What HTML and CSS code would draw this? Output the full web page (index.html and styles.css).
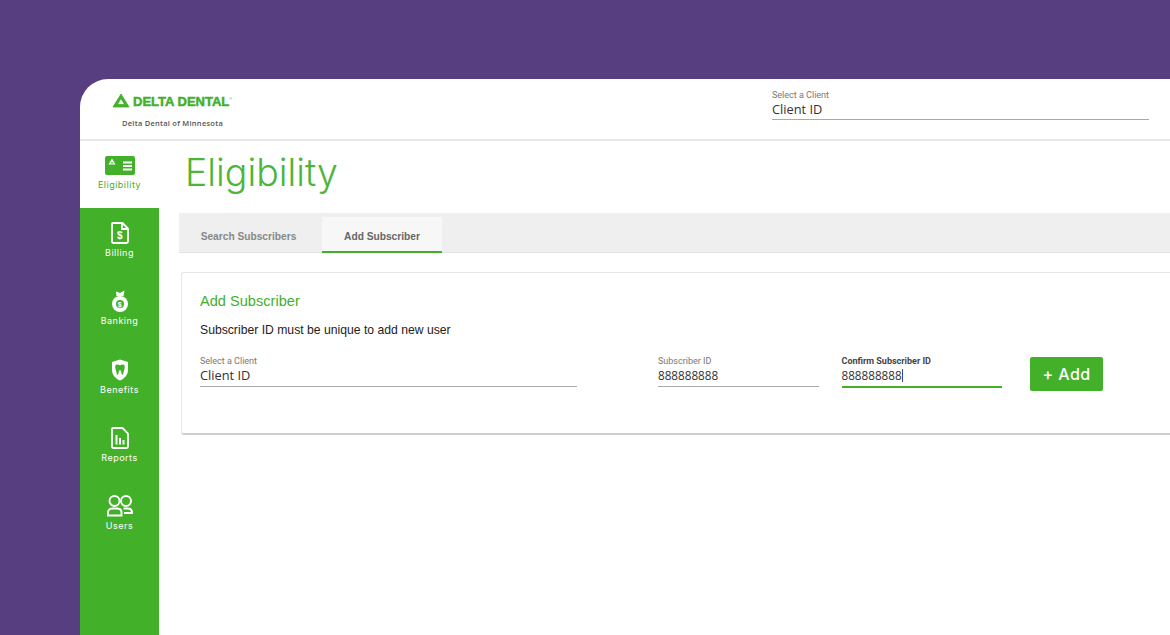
FILE: index.html
```html
<!DOCTYPE html>
<html lang="en">

<head>
    <meta charset="UTF-8" />
    <title>Eligibility</title>
    <link rel="stylesheet" href="styles.css">
</head>

<body>
    <div class="window">
        <header class="topbar">
            <div class="brand">
                <div class="logo">
                    <svg class="logo-mark" viewBox="0 0 18 15">
                        <path fill-rule="evenodd" stroke="#43b02a" stroke-width="0.800" stroke-linejoin="round" d="M9 1 17 14H1ZM9 5.500 5.400 11.500H12.600Z" />
                    </svg>
                    <span class="logo-text">DELTA DENTAL<sup>®</sup></span>
                </div>
                <div class="brand-sub">Delta Dental of Minnesota</div>
            </div>
            <div class="field client-top">
                <label>Select a Client</label>
                <div class="value">Client ID</div>
            </div>
        </header>

        <div class="body-row">
            <nav class="sidebar">
                <a class="nav-item active">
                    <svg class="nav-icon" viewBox="0 0 30 19">
                        <rect width="30" height="19" rx="2" fill="#43b02a" />
                        <path fill-rule="evenodd" d="M7 2.500 10.500 8.500H3.500ZM7 5.500 5.800 7.500H8.200Z" fill="#fff" />
                        <path d="M18 6.500H27M18 10H27M18 13.500H27" stroke="#fff" stroke-width="2" />
                    </svg>
                    <span>Eligibility</span>
                </a>
                <a class="nav-item">
                    <svg class="nav-icon" viewBox="0 0 18 22">
                        <path d="M2 1H11.500L17 6.500V19.500A1.500 1.500 0 0 1 15.500 21H2.500A1.500 1.500 0 0 1 1 19.500V2A1 1 0 0 1 2 1ZM11 1V7H17" fill="none" stroke="#fff" stroke-width="1.800" />
                        <text x="9" y="16.500" class="icon-dollar">$</text>
                    </svg>
                    <span>Billing</span>
                </a>
                <a class="nav-item">
                    <svg class="nav-icon" viewBox="0 0 18 22">
                        <path d="M5.500 6 5 1.500 9 3 13.500 0.500 12.500 6Z" fill="#fff" />
                        <circle cx="9" cy="14" r="8" fill="#fff" />
                        <circle cx="9" cy="14" r="4" fill="#43b02a" />
                        <text x="9" y="16.500" class="icon-dollar small">$</text>
                    </svg>
                    <span>Banking</span>
                </a>
                <a class="nav-item">
                    <svg class="nav-icon" viewBox="0 0 18 22">
                        <path fill-rule="evenodd" d="M9 0.500 17 3V11C17 16 13.500 19.500 9 21.500 4.500 19.500 1 16 1 11V3ZM6 5.500C4.500 5.500 4 7 4.300 9 4.600 11 5.500 12 5.800 15.500H7.300L8 11.500H10L10.700 15.500H12.200C12.500 12 13.400 11 13.700 9 14 7 13.500 5.500 12 5.500 10.800 5.500 10 6.200 9 6.200 8 6.200 7.200 5.500 6 5.500Z" fill="#fff" />
                    </svg>
                    <span>Benefits</span>
                </a>
                <a class="nav-item">
                    <svg class="nav-icon" viewBox="0 0 18 22">
                        <path d="M2 1H11.500L17 6.500V19.500A1.500 1.500 0 0 1 15.500 21H2.500A1.500 1.500 0 0 1 1 19.500V2A1 1 0 0 1 2 1Z" fill="none" stroke="#fff" stroke-width="1.800" />
                        <path d="M5.500 8V17.500M9 11V17.500M12.500 13V17.500" stroke="#fff" stroke-width="2" />
                    </svg>
                    <span>Reports</span>
                </a>
                <a class="nav-item">
                    <svg class="nav-icon users" viewBox="0 0 26 22">
                        <g fill="none" stroke="#fff" stroke-width="1.900">
                            <circle cx="7.500" cy="6" r="5" />
                            <circle cx="19" cy="6" r="5" />
                            <path d="M1 20.500V17.500C1 15 3 13.500 5.500 13.500H10C13 13.500 14.500 15 14.500 17.500V20.500Z" />
                            <path d="M16.500 13.500H20.500C23 13.500 25 15 25 17.500V18H17" />
                        </g>
                    </svg>
                    <span>Users</span>
                </a>
            </nav>

            <main class="content">
                <h1>Eligibility</h1>

                <div class="tabs">
                    <div class="tab">Search Subscribers</div>
                    <div class="tab selected">Add Subscriber</div>
                </div>

                <section class="card">
                    <h2>Add Subscriber</h2>
                    <p>Subscriber ID must be unique to add new user</p>
                    <div class="form-row">
                        <div class="field client">
                            <label>Select a Client</label>
                            <div class="value">Client ID</div>
                        </div>
                        <div class="field sub-id">
                            <label>Subscriber ID</label>
                            <div class="value">888888888</div>
                        </div>
                        <div class="field sub-id focused">
                            <label>Confirm Subscriber ID</label>
                            <div class="value">888888888<i class="caret"></i></div>
                        </div>
                        <button>+ Add</button>
                    </div>
                </section>
            </main>
        </div>
    </div>
</body>

</html>
```

FILE: styles.css
```css
html,
body {
    height: 100%;
    overflow: hidden;
}

body {
    margin: 0;
    padding: 79px 0 0 80px;
    box-sizing: border-box;
    background-color: #563e80;
    font-family: "Open Sans", Arial, sans-serif;
}

.window {
    height: 556px;
    background-color: white;
    border-top-left-radius: 28px;
    overflow: hidden;
}

.topbar {
    display: flex;
    height: 60px;
    border-bottom: 2px solid #e9e9e9;
}

.brand {
    width: 692px;
    flex-shrink: 0;
    padding: 14px 0 0 32px;
    box-sizing: border-box;
}

.logo {
    display: flex;
    align-items: center;
    gap: 3px;
    height: 15px;
}

.logo-mark {
    width: 18px;
    height: 15px;
    fill: #43b02a;
}

.logo-text {
    padding-top: 2px;
    font-family: "Liberation Sans", Arial, sans-serif;
    font-weight: bold;
    font-size: 13px;
    color: #43b02a;
    -webkit-text-stroke: 0.500px #43b02a;
}

.logo-text sup {
    font-size: 4px;
    font-weight: normal;
    -webkit-text-stroke: 0;
    line-height: 0;
    vertical-align: 6px;
}

.brand-sub {
    margin: 10px 0 0 10px;
    font-size: 7.500px;
    font-weight: 600;
    letter-spacing: 0.250px;
    color: #555;
}

.field label {
    display: block;
    font-family: Roboto, Arial, sans-serif;
    font-size: 9px;
    line-height: 11px;
    color: #777;
}

.field .value {
    font-family: "Open Sans", Arial, sans-serif;
    font-size: 12.800px;
    line-height: 17px;
    color: #333;
    border-bottom: 1px solid #aaa;
    padding: 0 0 1px;
}

.client-top {
    width: 377px;
    padding-top: 11px;
}

.body-row {
    display: flex;
    height: 494px;
}

.sidebar {
    width: 79px;
    flex-shrink: 0;
    background-color: #43b02a;
}

.nav-item {
    display: flex;
    flex-direction: column;
    align-items: center;
    height: 68.300px;
    padding-top: 14px;
    box-sizing: border-box;
    font-family: Inter, Arial, sans-serif;
    font-size: 9px;
    letter-spacing: 0.500px;
    color: white;
}

.nav-item span {
    margin-top: 3px;
}

.nav-item.active {
    height: 67px;
    padding-top: 15px;
    background-color: white;
    color: #43b02a;
}

.nav-item.active span {
    margin-top: 3.500px;
}

.nav-icon {
    width: 18px;
    height: 22px;
}

.nav-item.active .nav-icon {
    width: 30px;
    height: 19px;
}

.nav-icon.users {
    width: 26px;
    height: 22px;
}

.icon-dollar {
    font-family: "Liberation Sans", Arial, sans-serif;
    font-size: 10px;
    font-weight: bold;
    text-anchor: middle;
    fill: white;
}

.icon-dollar.small {
    font-size: 7px;
}

.content {
    flex: 1;
    min-width: 0;
    padding: 10px 0 0 20px;
}

h1 {
    margin: 0 0 18px 6px;
    font-family: Inter, Arial, sans-serif;
    font-size: 37.500px;
    font-weight: 300;
    line-height: 44px;
    color: #4db538;
}

.tabs {
    display: flex;
    height: 39px;
    background-color: #efefef;
    border-bottom: 1px solid #e4e4e4;
}

.tab {
    width: 143px;
    padding-right: 4px;
    box-sizing: border-box;
    font-family: "Liberation Sans", Arial, sans-serif;
    font-size: 10.200px;
    font-weight: bold;
    line-height: 47px;
    text-align: center;
    color: #888;
}

.tab.selected {
    width: 120px;
    height: 34px;
    margin-top: 4px;
    padding-right: 0;
    box-sizing: content-box;
    line-height: 39px;
    background-color: #f7f7f7;
    border-bottom: 2px solid #43b02a;
    color: #666;
}

.card {
    height: 163px;
    margin: 19px 0 0 2px;
    padding: 20px 0 0 18px;
    border: 1px solid #e6e6e6;
    border-right: none;
    border-bottom: 2px solid #cfcfcf;
    border-radius: 3px 0 0 3px;
    box-sizing: border-box;
}

h2 {
    margin: 0;
    font-family: "Liberation Sans", Arial, sans-serif;
    font-size: 14.600px;
    font-weight: normal;
    line-height: 17px;
    color: #43b02a;
}

.card p {
    margin: 12px 0 0;
    font-family: "Liberation Sans", Arial, sans-serif;
    font-size: 12.200px;
    line-height: 17px;
    color: #222;
}

.form-row {
    display: flex;
    align-items: flex-start;
    gap: 23px;
    margin-top: 17px;
}

.form-row .field.client {
    width: 377px;
    margin-right: 58px;
}

.form-row .field.sub-id {
    width: 160.500px;
}

.form-row .field .value {
    padding-bottom: 2px;
}

.form-row .sub-id .value {
    font-size: 11.700px;
}

.field.focused label {
    font-weight: bold;
    color: #444;
}

.field.focused .value {
    border-bottom: 2px solid #43b02a;
}

.caret {
    display: inline-block;
    width: 1px;
    height: 13px;
    vertical-align: -2px;
    background-color: #3a4a9a;
}

button {
    width: 73px;
    height: 34px;
    margin: 1px 0 0 5px;
    background-color: #43b02a;
    color: white;
    border: none;
    border-radius: 2px;
    font-family: Inter, Arial, sans-serif;
    font-size: 16px;
    font-weight: 500;
    letter-spacing: 0.400px;
}
```
